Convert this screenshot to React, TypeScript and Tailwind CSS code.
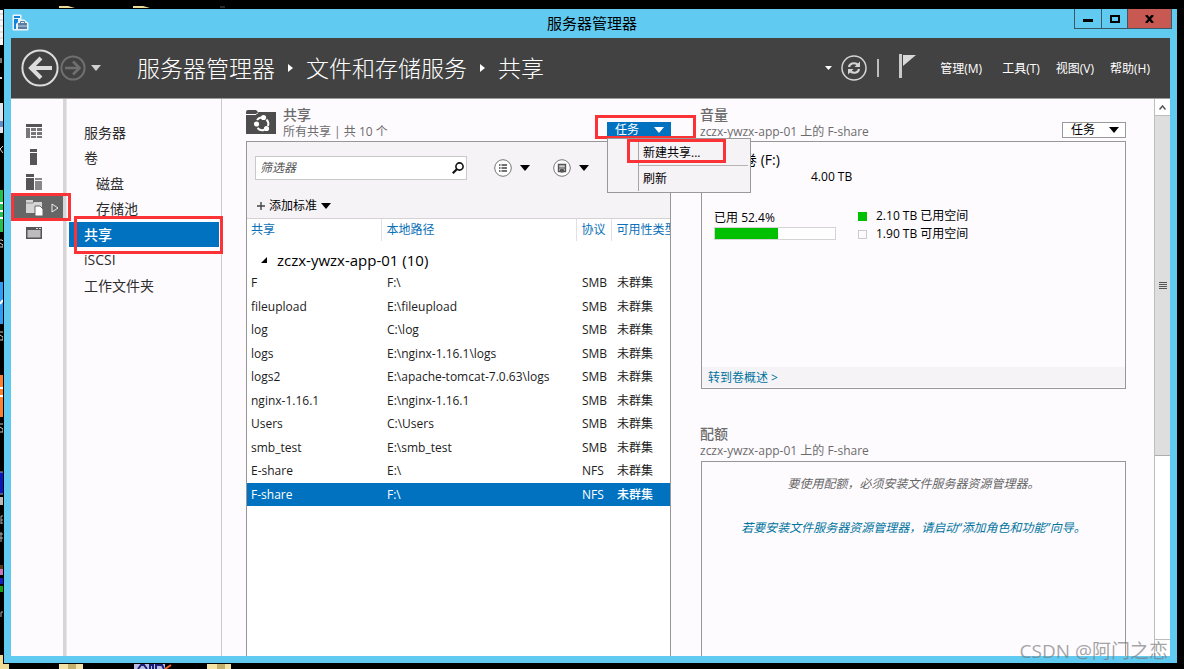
import React from "react";

const shares = [
  { name: "F", path: "F:\\", protocol: "SMB" },
  { name: "fileupload", path: "E:\\fileupload", protocol: "SMB" },
  { name: "log", path: "C:\\log", protocol: "SMB" },
  { name: "logs", path: "E:\\nginx-1.16.1\\logs", protocol: "SMB" },
  { name: "logs2", path: "E:\\apache-tomcat-7.0.63\\logs", protocol: "SMB" },
  { name: "nginx-1.16.1", path: "E:\\nginx-1.16.1", protocol: "SMB" },
  { name: "Users", path: "C:\\Users", protocol: "SMB" },
  { name: "smb_test", path: "E:\\smb_test", protocol: "SMB" },
  { name: "E-share", path: "E:\\", protocol: "NFS" },
  { name: "F-share", path: "F:\\", protocol: "NFS", selected: true },
];

const navItems = [
  { label: "服务器" },
  { label: "卷" },
  { label: "磁盘", indent: true },
  { label: "存储池", indent: true },
  { label: "共享", selected: true },
  { label: "iSCSI" },
  { label: "工作文件夹" },
];

const volume = { usedPercent: 52.4 };

function Caret({ className = "w-2.5 h-[6px]" }: { className?: string }) {
  return (
    <svg viewBox="0 0 10 6" preserveAspectRatio="none" className={className} fill="currentColor" aria-hidden="true">
      <path d="M0 0H10L5 6Z" />
    </svg>
  );
}

function Crumb() {
  return (
    <svg viewBox="0 0 5 8" className="mx-[13px] h-2 w-[5px]" fill="#fff" aria-hidden="true">
      <path d="M0 0L5 4L0 8Z" />
    </svg>
  );
}

/* Fragments of the desktop icons behind the window */
function DesktopLeft() {
  return (
    <svg className="absolute left-0 top-0 h-[669px] w-[3px]" viewBox="0 0 3 669" aria-hidden="true">
      <rect y="10" width="3" height="35" fill="#f3f5f7" />
      <path d="M0 14H3M0 20H3M0 26H3M0 32H3M0 38H3" stroke="#c5c9ce" />
      <rect y="58" width="2" height="5" fill="#777" />
      <rect y="77" width="2" height="2" fill="#ddd" />
      <rect y="103" width="3" height="30" fill="#dfe6ef" />
      <rect y="121" width="3" height="6" fill="#5f8fc9" />
      <path d="M3 146L0 149L3 153" stroke="#ddd" fill="none" />
      <rect y="190" width="3" height="42" fill="#22c04c" />
      <path d="M0 203H3M0 211H3M0 218H3" stroke="#fff" strokeWidth="2" />
      <path d="M0 240H2L3 241M0 243L3 245V247H0" stroke="#ccc" fill="none" />
      <rect y="282" width="3" height="42" fill="#2d9cf5" />
      <path d="M0 304L3 300" stroke="#fff" strokeWidth="2" />
      <path d="M0 332H3M0 335L3 337V340H0" stroke="#ccc" fill="none" />
      <rect y="375" width="3" height="42" fill="#ff8130" />
      <path d="M0 388H3M0 396H3" stroke="#fff" strokeWidth="2" />
      <path d="M0 424H3M0 427L3 429V432H0" stroke="#ccc" fill="none" />
      <rect y="472" width="3" height="22" fill="#0618b8" />
      <path d="M0 472H3M0 494H3" stroke="#aaa" />
      <rect y="497" width="3" height="8" fill="#bbb" />
      <path d="M1 516V524M1 516H3M1 520H3M1 523H3M0 534H3M0 538H3M1 532V542" stroke="#aaa" />
      <rect y="565" width="3" height="4" fill="#5a3510" />
      <rect y="569" width="3" height="6" fill="#c978c0" />
      <rect y="578" width="3" height="6" fill="#1020c0" />
      <rect y="586" width="3" height="6" fill="#12a012" />
      <path d="M1 612V617M1 612H3" stroke="#aaa" />
      <rect y="655" width="3" height="14" fill="#eedb98" />
    </svg>
  );
}

function DesktopBottom() {
  return (
    <svg className="absolute bottom-0 left-0 h-[5px] w-[240px]" viewBox="0 0 240 5" aria-hidden="true">
      <rect width="9" height="5" fill="#eedb98" />
      <rect x="59" width="24" height="5" fill="#f3e3a6" />
      <rect x="68" width="8" height="5" fill="#c4ae6c" />
      <rect x="134" width="31" height="5" fill="#b9bde0" />
      <path d="M138 5L141 1H144L147 5M150 5V1H153V5M156 5V1H162L164 5" stroke="#1a1f7a" strokeWidth="2" fill="none" />
      <path d="M165 5L171 1" stroke="#f0602c" strokeWidth="2" />
      <rect x="207" width="24" height="5" fill="#f3e3a6" />
      <rect x="217" width="8" height="5" fill="#c4ae6c" />
    </svg>
  );
}

function DesktopTop() {
  return (
    <svg className="absolute left-[59px] top-[5px] h-[3px] w-[170px]" viewBox="0 0 170 3" aria-hidden="true">
      <path d="M0 1H9L16 3H0Z" fill="#eedb98" />
      <path d="M74 1H84L91 3H74Z" fill="#eedb98" />
      <path d="M161 2H166" stroke="#555" />
    </svg>
  );
}

function TitleBar() {
  return (
    <div className="grid h-[29px] shrink-0 grid-cols-[1fr_auto_1fr] pl-2 pr-[5px]">
      <svg viewBox="0 0 17 17" className="mt-[5px] h-[17px] w-[17px]" aria-hidden="true">
        <path d="M1 1H9V6H12L16 9V16H1Z" fill="#e9f5fb" stroke="#e9f5fb" strokeLinejoin="round" />
        <path d="M2 2H8V4H2ZM2 5H6V8L4 10V15H2Z" fill="#1583d8" />
        <rect x="6" y="9" width="9" height="6" fill="#5b7da0" />
        <path d="M8.500 9V7.500H12.500V9" stroke="#5b7da0" fill="none" />
        <path d="M6 12H15" stroke="#dbe8f2" strokeWidth=".8" />
      </svg>
      <h1 className="text-[15px] leading-[28px] text-black">服务器管理器</h1>
      <div className="flex h-5 justify-self-end border border-t-0 border-[#3b5965]">
        <button aria-label="最小化" className="flex w-[27px] items-center justify-center border-r border-[#3b5965]">
          <span className="mt-1 h-[3px] w-2.5 bg-black" />
        </button>
        <button aria-label="最大化" className="flex w-[25px] items-center justify-center">
          <span className="h-2 w-2.5 border-2 border-black" />
        </button>
        <button aria-label="关闭" className="flex w-[44px] items-center justify-center border-l border-[#3b5965] bg-[#c75952]">
          <svg viewBox="0 0 9 8" className="h-2 w-[9px]" aria-hidden="true">
            <path d="M1 0L8 8M8 0L1 8" stroke="#000" strokeWidth="2.4" />
          </svg>
        </button>
      </div>
    </div>
  );
}

function Banner() {
  return (
    <header className="flex h-[61px] shrink-0 items-center border-b border-[#9a9a9a] bg-[#424242] pl-[10px] pr-5 text-white">
      <button aria-label="后退">
        <svg viewBox="0 0 38 38" className="h-[38px] w-[38px]" fill="none" stroke="#dcdcdc" aria-hidden="true">
          <circle cx="19" cy="19" r="17.6" strokeWidth="2" />
          <path d="M31 19H10" strokeWidth="4" />
          <path d="M20 9L10 19L20 29" strokeWidth="4" />
        </svg>
      </button>
      <button aria-label="前进" className="ml-px">
        <svg viewBox="0 0 26 26" className="h-[26px] w-[26px]" fill="none" stroke="#6f6f6f" aria-hidden="true">
          <circle cx="13" cy="13" r="11.6" strokeWidth="2" />
          <path d="M5 13H19" strokeWidth="2.6" />
          <path d="M13 6.5L19.5 13L13 19.5" strokeWidth="2.6" />
        </svg>
      </button>
      <button aria-label="历史记录" className="ml-[5px] text-[#cfcfcf]">
        <Caret />
      </button>
      <nav aria-label="路径" className="ml-9 flex flex-1 items-center whitespace-nowrap text-[23px] font-light leading-8">
        <a href="#home">服务器管理器</a>
        <Crumb />
        <a href="#storage">文件和存储服务</a>
        <Crumb />
        <a href="#shares">共享</a>
      </nav>
      <button aria-label="刷新选项">
        <Caret className="h-[4px] w-[7px]" />
      </button>
      <button aria-label="刷新" className="ml-[9px]">
        <svg viewBox="0 0 26 26" className="h-[26px] w-[26px]" fill="none" stroke="#d4d4d4" aria-hidden="true">
          <circle cx="13" cy="13" r="12" strokeWidth="1.5" />
          <path d="M8 12C8.500 8.500 13 7 16.500 9.500" strokeWidth="2.2" />
          <path d="M18 14C17.500 17.500 13 19 9.500 16.500" strokeWidth="2.2" />
          <path d="M19 6.500V12H13.500ZM7 19.500V14H12.500Z" fill="#d4d4d4" stroke="none" />
        </svg>
      </button>
      <span className="ml-2.5 h-[18px] w-0.5 bg-[#bdbdbd]" />
      <button aria-label="通知" className="-mt-1 ml-5">
        <svg viewBox="0 0 17 25" className="h-[25px] w-[17px]" aria-hidden="true">
          <path d="M0 0H3V24H0Z" fill="#c9c9c9" />
          <path d="M4 1H17L4 12Z" fill="#d8d8d8" />
        </svg>
      </button>
      <div className="ml-6 flex gap-4 whitespace-nowrap pt-0.5 text-xs">
        <button className="mr-1">管理(M)</button>
        <button>工具(T)</button>
        <button>视图(V)</button>
        <button>帮助(H)</button>
      </div>
    </header>
  );
}

function Mark({ className }: { className: string }) {
  return <span aria-hidden="true" className={"pointer-events-none absolute border-3 border-[#fb3236] " + className} />;
}

function Rail() {
  const item = "flex w-full items-center pl-[15px] odd:h-[26px] even:h-[25px]";
  return (
    <aside className="w-[52px] shrink-0 pt-[19px]">
      <button aria-label="仪表板" className={item}>
        <svg viewBox="0 0 16 16" className="h-4 w-4" fill="#777" aria-hidden="true">
          <path d="M0 1H16V4H0Z" fill="#555" />
          <path d="M0 5H4V15H0ZM5 5H10V8H5ZM11 5H16V8H11ZM5 9H10V12H5ZM11 9H16V12H11ZM5 13H10V15H5ZM11 13H16V15H11Z" />
        </svg>
      </button>
      <button aria-label="本地服务器" className={item}>
        <svg viewBox="0 0 16 16" className="h-4 w-4" fill="#555" aria-hidden="true">
          <path d="M4 0H11V3H4ZM4 4H11V16H4Z" />
        </svg>
      </button>
      <button aria-label="所有服务器" className={item}>
        <svg viewBox="0 0 16 16" className="h-4 w-4" fill="#555" aria-hidden="true">
          <path d="M0 0H8V3H0ZM0 4H8V16H0Z" />
          <path d="M9 4H16V6H9ZM9 7H16V16H9Z" fill="#888" />
        </svg>
      </button>
      <button aria-label="文件和存储服务" className={item + " relative"}>
        <span className="-ml-[15px] flex h-6 w-[52px] items-center justify-between bg-[#656665] pl-[15px] pr-1">
          <svg viewBox="0 0 17 16" className="h-4 w-[17px]" aria-hidden="true">
            <path d="M0 0H7V2H16V13H0Z" fill="#d4d4d4" />
            <path d="M0 3H7L8 2" stroke="#8a8a8a" fill="none" />
            <path d="M9 6H14L17 9V16H9Z" fill="#fff" stroke="#656665" />
          </svg>
          <svg viewBox="0 0 8 10" className="h-2.5 w-2" fill="none" stroke="#eee" aria-hidden="true">
            <path d="M1 1L7 5L1 9Z" />
          </svg>
        </span>
        <Mark className="left-0 top-[-2px] z-10 h-7 w-[60px]" />
      </button>
      <button aria-label="远程桌面" className={item}>
        <svg viewBox="0 0 16 12" className="h-3 w-4" aria-hidden="true">
          <rect width="16" height="12" fill="#555" />
          <rect x="1.500" y="3" width="13" height="7.500" fill="#bcbcbc" />
          <path d="M10 1.500H12M13 1.500H15" stroke="#ddd" />
        </svg>
      </button>
    </aside>
  );
}

function SideNav() {
  return (
    <nav aria-label="存储" className="w-[155px] shrink-0 border-r border-[#cbc9cd] px-0.5 pt-[21px] text-sm text-[#2d2d2d]">
      <ul>
        {navItems.map((n) => (
          <li key={n.label} className="relative odd:h-[25px] even:h-[26px]">
            <a
              href={"#" + n.label}
              aria-current={n.selected ? "page" : undefined}
              className={
                "block leading-[25px] " +
                (n.indent ? "pl-[27px] " : "pl-[15px] ") +
                (n.selected ? "bg-[#0072c0] font-medium text-white" : "")
              }
            >
              {n.label}
            </a>
            {n.selected && <Mark className="-right-1 -top-[6px] bottom-[-7px] left-[5px] z-10" />}
          </li>
        ))}
      </ul>
    </nav>
  );
}

function TileHeading({ title, subtitle }: { title: string; subtitle: string }) {
  return (
    <div className="-ml-px whitespace-nowrap text-[#6c6c6c]">
      <h2 className="text-sm font-medium leading-4">{title}</h2>
      <p className="text-xs leading-[17px]">{subtitle}</p>
    </div>
  );
}

function TasksMenu() {
  return (
    <div className="relative mb-[3px] self-end">
      <button aria-expanded="true" className="flex h-4 w-16 items-center justify-between bg-[#0072c0] pl-2 pr-[7px] text-xs leading-4 text-white">
        任务
        <Caret />
      </button>
      <Mark className="-left-3 -right-[25px] -top-[7px] h-6" />
      <div role="menu" className="absolute left-0 top-full z-20 w-36 border border-[#999] bg-[#f6f3f7] py-px pl-[30px] pr-0.5 text-xs text-black">
        <div className="border-l border-[#a5a5a5]">
          <div className="border-b border-[#b5b5b5]">
            <button role="menuitem" className="block h-[25px] pl-1">新建共享...</button>
          </div>
          <button role="menuitem" className="block h-[25px] pl-1">刷新</button>
        </div>
        <Mark className="left-[19px] top-0 h-6 w-[99px]" />
      </div>
    </div>
  );
}

function Toolbar() {
  return (
    <div className="h-[77px] border-b border-[#d4d2d5] bg-[#f6f3f7] pl-2 pt-[14px]">
      <div className="flex items-center">
        <label className="flex h-6 w-[212px] items-center border border-[#c9c9c9] bg-white pl-1 pr-0.5">
          <input aria-label="筛选器" placeholder="筛选器" className="min-w-0 flex-1 text-xs italic outline-none placeholder:text-[#555]" />
          <svg viewBox="0 0 12 12" className="h-3 w-3" fill="none" stroke="#111" aria-hidden="true">
            <circle cx="7.500" cy="4.500" r="3.600" strokeWidth="1.600" />
            <path d="M5 7L.8 11.200" strokeWidth="2.200" />
          </svg>
        </label>
        <button aria-label="视图" className="ml-[27px] flex items-center gap-2 text-black">
          <svg viewBox="0 0 18 18" className="h-[18px] w-[18px]" aria-hidden="true">
            <circle cx="9" cy="9" r="8.300" fill="#fff" stroke="#777" />
            <path d="M5 6H6.500M5 9H6.500M5 12H6.500M7.500 6H13M7.500 9H13M7.500 12H13" stroke="#444" strokeWidth="1.400" />
          </svg>
          <Caret />
        </button>
        <button aria-label="保存" className="ml-[23px] flex items-center gap-2 text-black">
          <svg viewBox="0 0 18 18" className="h-[18px] w-[18px]" aria-hidden="true">
            <circle cx="9" cy="9" r="8.300" fill="#fff" stroke="#777" />
            <path d="M5.500 5.500H12.500V12.500H5.500Z" fill="#ccc" stroke="#555" strokeWidth="1.400" />
            <path d="M6 9H12M7.500 10.500H10.500V13H7.500Z" fill="#555" stroke="#555" />
          </svg>
          <Caret />
        </button>
      </div>
      <button className="ml-0.5 mt-4 flex items-center text-xs leading-5 text-black">
        <svg viewBox="0 0 8 8" className="mr-1 h-2 w-2" stroke="#444" strokeWidth="1.400" aria-hidden="true">
          <path d="M4 0V8M0 4H8" />
        </svg>
        添加标准
        <Caret className="ml-1 h-[6px] w-2.5" />
      </button>
    </div>
  );
}

function SharesTable() {
  const cell = "overflow-hidden whitespace-nowrap p-0 pl-[6px]";
  const head = "overflow-hidden whitespace-nowrap border-l border-[#e2e0e4] p-0 pl-[5px] text-left font-normal";
  return (
    <table className="w-full table-fixed border-collapse text-xs text-[#1c1c1c]">
      <colgroup>
        <col className="w-[134px]" />
        <col className="w-[195px]" />
        <col className="w-[35px]" />
        <col />
      </colgroup>
      <thead>
        <tr className="h-[22px] text-[#0a70b8]">
          <th scope="col" className="whitespace-nowrap p-0 pl-1 text-left font-normal">共享</th>
          <th scope="col" className={head}>本地路径</th>
          <th scope="col" className={head}>协议</th>
          <th scope="col" className={head}>可用性类型</th>
        </tr>
      </thead>
      <tbody>
        <tr className="h-[30px]">
          <th scope="rowgroup" colSpan={4} className="p-0 pl-[14px] pt-2 text-left text-[15px] font-normal leading-5 text-black">
            <span className="flex items-center gap-2.5">
              <svg viewBox="0 0 6 6" className="h-[6px] w-[6px]" aria-hidden="true">
                <path d="M6 0V6H0Z" />
              </svg>
              zczx-ywzx-app-01 (10)
            </span>
          </th>
        </tr>
      </tbody>
      <tbody>
        {shares.map((s) => (
          <tr
            key={s.name}
            className={"odd:h-6 even:h-[23px] " + (s.selected ? "bg-[#0072c0] font-medium text-white" : "")}
          >
            <td className="whitespace-nowrap p-0 pl-1">{s.name}</td>
            <td className={cell}>{s.path}</td>
            <td className={cell}>{s.protocol}</td>
            <td className={cell}>未群集</td>
          </tr>
        ))}
      </tbody>
    </table>
  );
}

function SharesTile() {
  return (
    <section className="flex min-w-0 flex-1 flex-col">
      <div className="flex h-[42px] shrink-0 items-start pt-2">
        <svg viewBox="0 0 30 24" className="mr-2 mt-[3px] h-6 w-[30px]" aria-hidden="true">
          <path d="M0 2Q0 0 2 0H10L12 2H30V24H0Z" fill="#4d4d4d" />
          <path d="M0 4.500H10L12 2.500" stroke="#fefbff" fill="none" />
          <path
            d="M11 10A6.500 6.500 0 0 1 15 7.500M20.500 9.500A6.500 6.500 0 0 1 22 16M18.500 19.800A6.500 6.500 0 0 1 11.500 18"
            fill="none"
            stroke="#fff"
            strokeWidth="2"
          />
          <g fill="#fff">
            <circle cx="17.500" cy="7.500" r="2.600" />
            <circle cx="10.500" cy="14" r="2.600" />
            <circle cx="20.500" cy="18.500" r="2.600" />
          </g>
        </svg>
        <TileHeading title="共享" subtitle="所有共享 | 共 10 个" />
        <div className="ml-auto flex h-[34px]">
          <TasksMenu />
        </div>
      </div>
      <div className="min-h-0 flex-1 overflow-hidden border border-b-0 border-[#979797] bg-white">
        <Toolbar />
        <SharesTable />
      </div>
    </section>
  );
}

function VolumeTile() {
  return (
    <section className="shrink-0">
      <div className="flex h-[42px] items-start justify-between pt-2">
        <TileHeading title="音量" subtitle="zczx-ywzx-app-01 上的 F-share" />
        <button className="mb-[3px] flex h-4 w-16 items-center justify-between self-end border border-[#999] bg-white pl-2 pr-1.5 text-xs leading-[14px] text-black">
          任务
          <Caret />
        </button>
      </div>
      <div className="flex h-[248px] flex-col border border-[#979797] text-xs text-black">
        <h3 className="pl-[41px] pt-2 text-sm leading-5">卷 (F:)</h3>
        <p className="pl-[109px] leading-[14px]">4.00 TB</p>
        <div className="mt-[23px] flex pl-3 leading-[18px]">
          <div className="w-[122px]">
            <p className="pt-0.5">已用 {volume.usedPercent}%</p>
            <div className="h-[13px] border border-[#d4d4d4] bg-white">
              <div className="h-full bg-[#00c000]" style={{ width: volume.usedPercent + "%" }} />
            </div>
          </div>
          <ul className="ml-[22px]">
            <li className="flex items-center gap-[9px]">
              <span className="h-[9px] w-[9px] bg-[#00c000]" />
              2.10 TB 已用空间
            </li>
            <li className="flex items-center gap-[9px]">
              <span className="h-[9px] w-[9px] border border-[#ccc]" />
              1.90 TB 可用空间
            </li>
          </ul>
        </div>
        <div className="mb-px mt-auto bg-[#f6f3f7] pl-1.5 pt-px leading-[19px]">
          <a href="#volumes" className="text-[#00749c]">转到卷概述 &gt;</a>
        </div>
      </div>
    </section>
  );
}

function QuotaTile() {
  return (
    <section className="mt-[29px] flex min-h-0 flex-1 flex-col">
      <div className="h-[43px] shrink-0 pt-2">
        <TileHeading title="配额" subtitle="zczx-ywzx-app-01 上的 F-share" />
      </div>
      <div className="min-h-0 flex-1 border border-b-0 border-[#979797] pt-3 text-center text-xs italic leading-5">
        <p className="text-[#666]">要使用配额，必须安装文件服务器资源管理器。</p>
        <p className="mt-6">
          <a href="#wizard" className="text-[#00749c]">若要安装文件服务器资源管理器，请启动“添加角色和功能”向导。</a>
        </p>
      </div>
    </section>
  );
}

function Scrollbar() {
  return (
    <div aria-hidden="true" className="flex w-4 shrink-0 flex-col border-l border-[#bdbdbd] bg-white">
      <div className="flex h-[17px] items-center justify-center border-b border-[#bdbdbd]">
        <svg viewBox="0 0 7 5" className="h-[5px] w-[7px]" fill="none" stroke="#555" strokeWidth="1.500">
          <path d="M.5 4.500L3.500 1L6.500 4.500" />
        </svg>
      </div>
      <div className="flex h-[340px] flex-col items-center justify-center gap-px border-b border-[#adadad] bg-[#dedede]">
        <span className="h-px w-2 bg-[#555]" />
        <span className="h-px w-2 bg-[#555]" />
        <span className="h-px w-2 bg-[#555]" />
        <span className="h-px w-2 bg-[#555]" />
      </div>
      <div className="flex-1" />
      <div className="h-[17px] border-t border-[#bdbdbd]" />
    </div>
  );
}

export default function App() {
  return (
    <div className="relative flex h-screen flex-col overflow-hidden bg-black pb-[6px] pl-1 pr-[7px] pt-[9px] font-['Open_Sans','Noto_Sans_CJK_SC',sans-serif]">
      <DesktopTop />
      <DesktopLeft />
      <DesktopBottom />
      <div className="flex min-h-0 flex-1 flex-col bg-[#61caf0]">
        <TitleBar />
        <div className="mx-[7px] mb-[7px] flex min-h-0 flex-1 flex-col bg-[#fefbff]">
          <Banner />
          <div className="flex min-h-0 flex-1">
            <Rail />
            <div className="w-1 shrink-0 border-r border-[#e9e7ea] bg-[#d6d5d8]" />
            <SideNav />
            <main className="flex min-w-0 flex-1 gap-[30px] pl-6 pr-7">
              <SharesTile />
              <div className="flex min-w-0 flex-1 flex-col">
                <VolumeTile />
                <QuotaTile />
              </div>
            </main>
            <Scrollbar />
          </div>
        </div>
      </div>
      <p className="pointer-events-none absolute bottom-1 right-4 text-[19px] leading-7 text-[#777777aa]">CSDN @阿门之恋</p>
    </div>
  );
}
